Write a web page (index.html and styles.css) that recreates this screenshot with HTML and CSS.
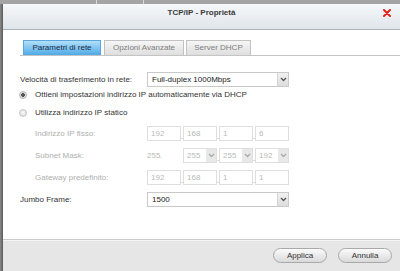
FILE: index.html
```html
<!DOCTYPE html>
<html>
<head>
<meta charset="utf-8">
<link rel="stylesheet" href="styles.css">
</head>
<body>
<div class="screen">
  <div class="topstrip">
    <span class="strip-seg w1"></span><span class="strip-sep"></span><span class="strip-seg w2"></span><span class="strip-sep"></span><span class="strip-seg grow"></span>
  </div>
  <div class="main">
    <div class="leftedge"></div>
    <div class="dialog">
      <div class="titlebar">
        <span></span>
        <span class="title">TCP/IP - Proprietà</span>
        <span class="close"><svg width="8" height="8" viewBox="0 0 8 8"><path d="M1 1L7 7M7 1L1 7" stroke="#e2231a" stroke-width="2" stroke-linecap="round"/></svg></span>
      </div>
      <div class="content">
        <div class="tabs">
          <div class="tab active t1">Parametri di rete</div>
          <div class="tab t2">Opzioni Avanzate</div>
          <div class="tab t3">Server DHCP</div>
        </div>
        <div class="form">
          <div class="row r1">
            <div class="label">Velocità di trasferimento in rete:</div>
            <div class="select wide"><span class="val">Full-duplex 1000Mbps</span><span class="arrow"><svg width="7" height="5" viewBox="0 0 7 5"><path d="M1 1L3.5 3.5L6 1" fill="none" stroke="#555" stroke-width="1.3"/></svg></span></div>
          </div>
          <div class="row r2">
            <span class="radio on"></span><span class="rlabel">Ottieni impostazioni indirizzo IP automaticamente via DHCP</span>
          </div>
          <div class="row r3">
            <span class="radio"></span><span class="rlabel">Utilizza indirizzo IP statico</span>
          </div>
          <div class="row r4 sub">
            <div class="label dis">Indirizzo IP fisso:</div>
            <div class="ip">
              <span class="box">192</span><span class="dot">.</span><span class="box">168</span><span class="dot">.</span><span class="box">1</span><span class="dot">.</span><span class="box">6</span>
            </div>
          </div>
          <div class="row r5 sub">
            <div class="label dis">Subnet Mask:</div>
            <div class="ip">
              <span class="fixed">255.</span>
              <span class="msel"><span class="mval">255</span><span class="marrow"><svg width="7" height="5" viewBox="0 0 7 5"><path d="M1 1L3.5 3.5L6 1" fill="none" stroke="#aaa" stroke-width="1.3"/></svg></span></span><span class="dot">.</span>
              <span class="msel"><span class="mval">255</span><span class="marrow"><svg width="7" height="5" viewBox="0 0 7 5"><path d="M1 1L3.5 3.5L6 1" fill="none" stroke="#aaa" stroke-width="1.3"/></svg></span></span><span class="dot">.</span>
              <span class="msel"><span class="mval">192</span><span class="marrow"><svg width="7" height="5" viewBox="0 0 7 5"><path d="M1 1L3.5 3.5L6 1" fill="none" stroke="#aaa" stroke-width="1.3"/></svg></span></span>
            </div>
          </div>
          <div class="row r6 sub">
            <div class="label dis">Gateway predefinito:</div>
            <div class="ip">
              <span class="box">192</span><span class="dot">.</span><span class="box">168</span><span class="dot">.</span><span class="box">1</span><span class="dot">.</span><span class="box">1</span>
            </div>
          </div>
          <div class="row r7">
            <div class="label">Jumbo Frame:</div>
            <div class="select wide"><span class="val">1500</span><span class="arrow"><svg width="7" height="5" viewBox="0 0 7 5"><path d="M1 1L3.5 3.5L6 1" fill="none" stroke="#555" stroke-width="1.3"/></svg></span></div>
          </div>
        </div>
      </div>
      <div class="footer">
        <button class="btn">Applica</button>
        <button class="btn">Annulla</button>
      </div>
    </div>
  </div>
</div>
</body>
</html>
```
FILE: styles.css
```css
* { box-sizing: border-box; }
html, body { margin: 0; padding: 0; }
body {
  width: 400px;
  height: 271px;
  overflow: hidden;
  background: #8c8c8c;
  font-family: "Liberation Sans", Arial, sans-serif;
  font-size: 8px;
  color: #333;
}
.screen { display: flex; flex-direction: column; height: 271px; }
.topstrip { height: 4px; display: flex; background: #a4a4a4; }
.strip-seg.w1 { width: 96px; }
.strip-seg.w2 { width: 46px; }
.strip-seg.grow { flex: 1; }
.strip-sep { width: 1px; background: #d8d8d8; }
.main { flex: 1; display: flex; min-height: 0; }
.leftedge { width: 3px; background: linear-gradient(to right, #8a8a8a, #5a5a5a); }
.dialog { flex: 1; display: flex; flex-direction: column; background: #fff; }
.titlebar {
  height: 26px;
  display: grid;
  grid-template-columns: 1fr auto 1fr;
  align-items: start;
  padding-top: 3px;
  background: linear-gradient(to bottom, #f6f8fa, #dfe5ea);
  border-bottom: 1px solid #aab2ba;
}
.title { font-weight: bold; font-size: 8px; line-height: 12px; color: #3a3a3a; }
.close { justify-self: end; margin-right: 9px; margin-top: 2px; line-height: 0; }
.content { flex: 1; padding: 10px 0 0 17px; }
.tabs { display: flex; padding-left: 3px; border-bottom: 1px solid #c4c4c4; height: 16px; }
.tab {
  height: 15px;
  line-height: 14px;
  text-align: center;
  color: #808080;
  border: 1px solid #c2c2c2;
  border-bottom: none;
  background: linear-gradient(to bottom, #f6f6f6, #dedede);
}
.tab.t1 { width: 78px; }
.tab.t2 { width: 80px; margin-left: 3px; }
.tab.t3 { width: 65px; margin-left: 2px; }
.tab.active {
  color: #1b2b48;
  border-color: #5aa6dc;
  background: linear-gradient(to bottom, #b2e0fa, #4fa9e6);
}
.form { margin-top: 16px; display: flex; flex-direction: column; }
.row { display: flex; align-items: center; height: 15px; }
.r3 { margin-top: 3px; }
.r4 { margin-top: 6px; }
.r5, .r6, .r7 { margin-top: 7px; }
.label { width: 127px; white-space: nowrap; }
.sub .label { padding-left: 15px; }
.label.dis { color: #b0b0b0; }
.select {
  display: flex;
  height: 15px;
  border: 1px solid #c9c9c9;
  background: #fff;
}
.select.wide { width: 142px; }
.val { flex: 1; padding-left: 4px; line-height: 13px; color: #222; }
.arrow {
  width: 11px;
  display: flex;
  align-items: center;
  justify-content: center;
  background: linear-gradient(to bottom, #f2f2f2, #dcdcdc);
  border-left: 1px solid #d4d4d4;
}
.radio {
  width: 8px; height: 8px;
  margin-left: -1px; margin-right: 8px;
  border-radius: 50%;
  border: 1px solid #c6c6c6;
  background: radial-gradient(circle at 50% 40%, #fafafa, #d6d6d6);
}
.radio.on { background: radial-gradient(circle, #555 0 1.6px, #e6e6e6 2.2px, #cfcfcf); border-color: #b6b6b6; }
.rlabel { white-space: nowrap; color: #333; }
.ip { display: flex; align-items: stretch; height: 15px; }
.box {
  width: 34px;
  border: 1px solid #dedede;
  color: #bababa;
  padding-left: 3px;
  line-height: 13px;
}
.dot {
  width: 2px;
  color: #9a9a9a;
  font-size: 8px;
  line-height: 8px;
  align-self: flex-end;
  overflow: visible;
}
.fixed { width: 36px; color: #bababa; line-height: 15px; }
.msel {
  width: 34px;
  display: flex;
  border: 1px solid #dedede;
}
.mval { flex: 1; color: #bababa; padding-left: 3px; line-height: 13px; }
.marrow {
  width: 10px;
  display: flex; align-items: center; justify-content: center;
  background: #e8e8e8;
}
.footer {
  height: 32px;
  border-top: 1px solid #cbcbcb;
  box-shadow: inset 0 1px 0 #f4f4f4;
  background: #e6e6e6;
  display: flex;
  justify-content: flex-end;
  align-items: flex-start;
  padding: 8px 8px 0 0;
  gap: 11px;
}
.btn {
  width: 54px;
  height: 15px;
  padding: 0;
  border: 1px solid #a9a9a9;
  border-radius: 8px;
  background: linear-gradient(to bottom, #fbfbfb, #d9d9d9);
  font-family: "Liberation Sans", Arial, sans-serif;
  font-size: 8px;
  color: #333;
  line-height: 13px;
}
```
